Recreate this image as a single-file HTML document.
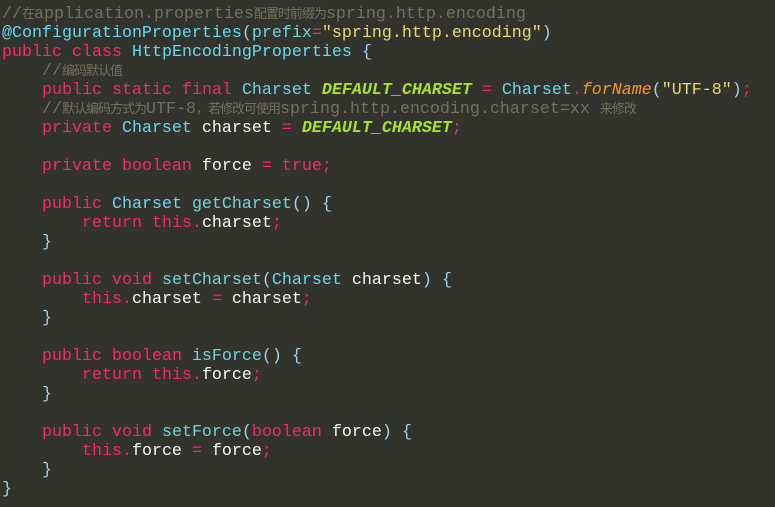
<!DOCTYPE html>
<html><head><meta charset="utf-8"><style>
html,body{margin:0;padding:0;background:#33332e;width:775px;height:507px;overflow:hidden}
pre{margin:0;padding:5px 0 0 2px;font-family:"Liberation Mono","Courier New",monospace;font-size:16.67px;line-height:19px;color:#f8f8f2;white-space:pre}
.c{color:#75715e}
.z{font-family:"Noto Sans CJK SC","WenQuanYi Zen Hei",sans-serif;font-size:13px;letter-spacing:-1px;line-height:0}
.k{color:#f92672}
.t{color:#66d9ef}
.m{color:#6fd6dd}
.g{color:#a6e22e;font-style:italic;font-weight:bold}
.s{color:#e6db74}
.p{color:#a6cfe8}
.f{color:#fd971f;font-style:italic}
</style></head><body><pre><span class="c">//<span class="z">在</span>application.properties<span class="z">配置时前缀为</span>spring.http.encoding</span>
<span class="t">@ConfigurationProperties</span><span class="p">(</span><span class="m">prefix</span><span class="k">=</span><span class="s">"spring.http.encoding"</span><span class="p">)</span>
<span class="k">public</span> <span class="k">class</span> <span class="t">HttpEncodingProperties</span> <span class="p">{</span>
    <span class="c">//<span class="z">编码默认值</span></span>
    <span class="k">public</span> <span class="k">static</span> <span class="k">final</span> <span class="t">Charset</span> <span class="g">DEFAULT_CHARSET</span> <span class="k">=</span> <span class="t">Charset</span><span class="k">.</span><span class="f">forName</span><span class="p">(</span><span class="s">"UTF-8"</span><span class="p">)</span><span class="k">;</span>
    <span class="c">//<span class="z">默认编码方式为</span>UTF-8<span class="z">，若修改可使用</span>spring.http.encoding.charset=xx <span class="z">来修改</span></span>
    <span class="k">private</span> <span class="t">Charset</span> charset <span class="k">=</span> <span class="g">DEFAULT_CHARSET</span><span class="k">;</span>

    <span class="k">private</span> <span class="k">boolean</span> force <span class="k">=</span> <span class="k">true;</span>

    <span class="k">public</span> <span class="t">Charset</span> <span class="m">getCharset</span><span class="p">()</span> <span class="p">{</span>
        <span class="k">return</span> <span class="k">this.</span>charset<span class="k">;</span>
    <span class="p">}</span>

    <span class="k">public</span> <span class="k">void</span> <span class="m">setCharset</span><span class="p">(</span><span class="t">Charset</span> charset<span class="p">)</span> <span class="p">{</span>
        <span class="k">this.</span>charset <span class="k">=</span> charset<span class="k">;</span>
    <span class="p">}</span>

    <span class="k">public</span> <span class="k">boolean</span> <span class="m">isForce</span><span class="p">()</span> <span class="p">{</span>
        <span class="k">return</span> <span class="k">this.</span>force<span class="k">;</span>
    <span class="p">}</span>

    <span class="k">public</span> <span class="k">void</span> <span class="m">setForce</span><span class="p">(</span><span class="k">boolean</span> force<span class="p">)</span> <span class="p">{</span>
        <span class="k">this.</span>force <span class="k">=</span> force<span class="k">;</span>
    <span class="p">}</span>
<span class="p">}</span>
</pre></body></html>
